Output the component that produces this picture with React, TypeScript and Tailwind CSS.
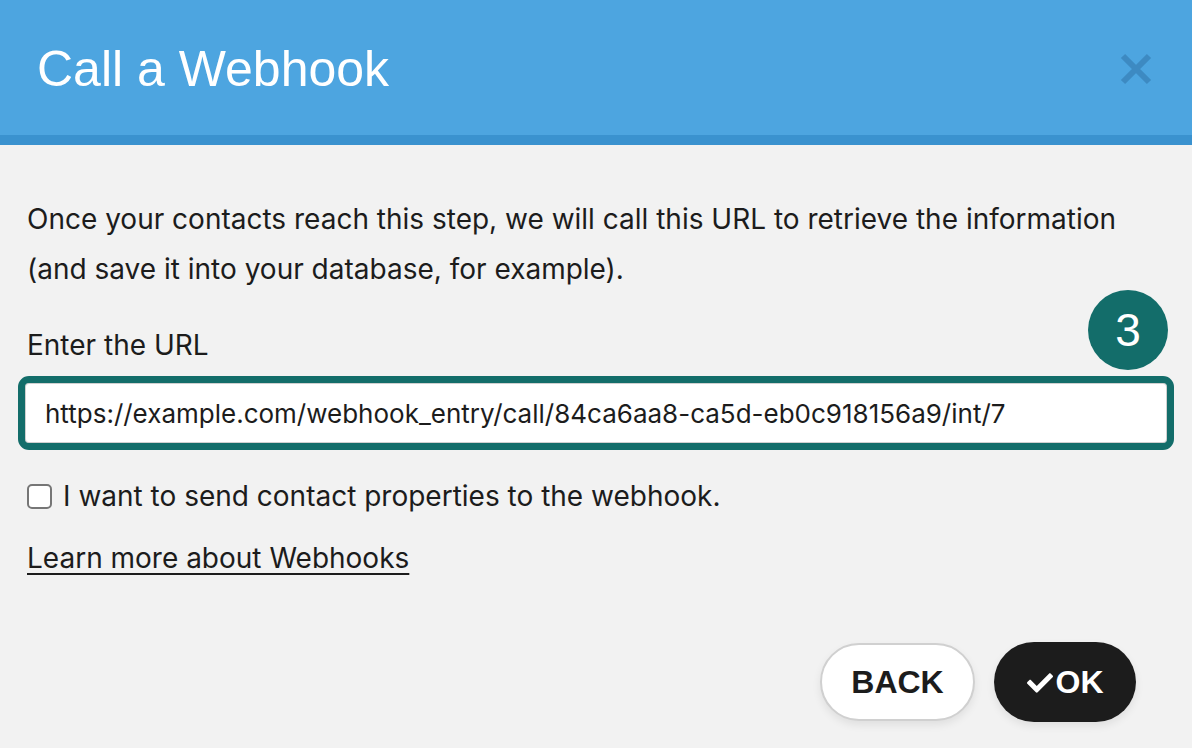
import { FaCheck } from "react-icons/fa";

export default function App() {
  return (
    <div className="w-[1192px] h-[748px] bg-[#f2f2f2] flex flex-col overflow-hidden" style={{ fontFamily: "Inter, 'Noto Sans', sans-serif" }}>
      {/* Header */}
      <div className="h-[145px] bg-[#4da5e0] border-b-[10px] border-[#3a92cf] flex items-center justify-between pl-[37px] pr-[40px] shrink-0">
        <h1 className="text-white text-[50px] font-normal pt-[4px]" style={{ fontFamily: "'Liberation Sans', Arial, sans-serif" }}>
          Call a Webhook
        </h1>
        <svg width="32" height="32" viewBox="0 0 32 32" className="mt-[2px]">
          <path d="M3 3 L29 29 M29 3 L3 29" stroke="#3d8ac2" strokeWidth="6" />
        </svg>
      </div>

      {/* Body */}
      <div className="flex flex-col px-[18px] pt-[49px]">
        <p className="text-[28px] leading-[50px] text-[#1c1c1c] px-[9px]">
          Once your contacts reach this step, we will call this URL to retrieve the information
          <br />
          (and save it into your database, for example).
        </p>

        <div className="relative mt-[35px]">
          <label className="block text-[28px] leading-[32px] text-[#1c1c1c] px-[9px] pb-[15px]">Enter the URL</label>
          <div className="absolute right-[6px] top-[-39px] w-[80px] h-[80px] rounded-full bg-[#136d6a] flex items-center justify-center text-white text-[46px]" style={{ fontFamily: "'Liberation Sans', Arial, sans-serif" }}>
            3
          </div>
          <div className="border-[7px] border-[#136d6a] rounded-[11px] bg-white h-[74px] flex items-center px-[20px] shadow-[inset_0_0_0_1px_#d0d0d0]">
            <span className="text-[26px] text-[#1c1c1c]">https://example.com/webhook_entry/call/84ca6aa8-ca5d-eb0c918156a9/int/7</span>
          </div>
        </div>

        <label className="flex items-center gap-[11px] px-[9px] mt-[29px] leading-[34px]">
          <span className="w-[25px] h-[25px] rounded-[5px] border-2 border-[#767676] bg-white inline-block shrink-0" />
          <span className="text-[28px] text-[#1c1c1c]">I want to send contact properties to the webhook.</span>
        </label>

        <a className="px-[9px] mt-[28px] text-[28px] leading-[34px] text-[#1c1c1c] underline underline-offset-[5px] decoration-2 self-start">
          Learn more about Webhooks
        </a>

        <div className="flex justify-end items-center gap-[19px] pr-[38px] mt-[67px]">
          <button className="w-[155px] h-[78px] rounded-[39px] bg-white border-2 border-[#d0d0d0] shadow-[0_4px_8px_rgba(0,0,0,0.08)] text-[#1c1c1c] text-[32px] font-bold" style={{ fontFamily: "'Liberation Sans', Arial, sans-serif" }}>
            BACK
          </button>
          <button className="w-[142px] h-[80px] rounded-[40px] bg-[#1c1c1c] text-white text-[32px] font-bold flex items-center justify-center gap-[3px] shadow-[0_4px_8px_rgba(0,0,0,0.08)]" style={{ fontFamily: "'Liberation Sans', Arial, sans-serif" }}>
            <FaCheck size={26} className="mt-[2px]" />
            OK
          </button>
        </div>
      </div>
    </div>
  );
}
